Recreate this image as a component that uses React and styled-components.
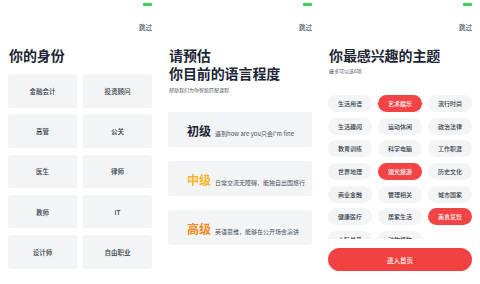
import React, { useState } from "react";
import styled, { createGlobalStyle } from "styled-components";

const GlobalStyle = createGlobalStyle`
  html, body {
    margin: 0;
    padding: 0;
    background: #ffffff;
  }
  body {
    font-family: "Noto Sans CJK SC", "Noto Sans", sans-serif;
    color: #1d2536;
  }
`;

const Screens = styled.div`
  display: grid;
  grid-template-columns: repeat(3, 160px);
  width: 480px;
  height: 284px;
  overflow: hidden;
`;

const Screen = styled.section`
  display: flex;
  flex-direction: column;
  padding: 0 8px;
  height: 284px;
  box-sizing: border-box;
  overflow: hidden;
`;

const StatusBar = styled.div`
  display: flex;
  justify-content: flex-end;
  padding: 3px 0 0;
  height: 3px;
`;

const Battery = styled.span`
  width: 9px;
  height: 3px;
  border-radius: 1px;
  background: #3ccf5e;
  margin-right: 0;
`;

const TopBar = styled.div`
  display: flex;
  justify-content: flex-end;
  margin-top: 17px;
`;

const Skip = styled.span`
  font-size: 6.5px;
  line-height: 8px;
  color: #2a2f3a;
`;

const Title = styled.h1`
  margin: 15px 0 0 1px;
  font-size: 14px;
  line-height: 18px;
  font-weight: 700;
  color: #1d2536;
  letter-spacing: -0.1px;
`;

const Hint = styled.p`
  margin: ${(p) => p.$top || 4}px 0 0 1px;
  font-size: 5px;
  line-height: 7px;
  color: #555b66;
`;

/* screen 1 */
const RoleGrid = styled.div`
  display: grid;
  grid-template-columns: 1fr 1fr;
  grid-auto-rows: 33.5px;
  column-gap: 6px;
  row-gap: 6.8px;
  margin-top: 10px;
`;

const RoleCard = styled.button`
  display: flex;
  align-items: center;
  justify-content: center;
  border: none;
  border-radius: 3px;
  background: #f3f4f6;
  font-family: inherit;
  font-size: 6.5px;
  font-weight: 500;
  color: #333a45;
  padding: 0;
  cursor: pointer;
`;

/* screen 2 */
const LevelList = styled.div`
  display: flex;
  flex-direction: column;
  gap: 14px;
  margin-top: 19px;
`;

const LevelCard = styled.div`
  display: flex;
  align-items: baseline;
  height: 35px;
  box-sizing: border-box;
  padding: 12px 0 0 19px;
  border-radius: 3px;
  background: #f3f4f6;
`;

const LevelName = styled.span`
  font-size: 12px;
  line-height: 14px;
  font-weight: 700;
  color: ${(p) => p.$color};
  margin-right: 4px;
`;

const LevelDesc = styled.span`
  font-size: 6px;
  color: #4a505b;
`;

/* screen 3 */
const TopicArea = styled.div`
  height: 144px;
  margin-top: 21px;
  overflow: hidden;
`;

const TopicGrid = styled.div`
  display: grid;
  grid-template-columns: repeat(3, 1fr);
  grid-auto-rows: 17px;
  column-gap: 6px;
  row-gap: 5.7px;
`;

const Chip = styled.button`
  display: flex;
  align-items: center;
  justify-content: center;
  border: none;
  border-radius: 9px;
  padding: 0;
  font-family: inherit;
  font-size: 6px;
  font-weight: 500;
  background: ${(p) => (p.$on ? "#f24444" : "#f3f4f6")};
  color: ${(p) => (p.$on ? "#ffffff" : "#333a45")};
  cursor: pointer;
`;

const EnterButton = styled.button`
  margin-top: 9px;
  height: 23px;
  border: none;
  border-radius: 12px;
  background: #f24141;
  color: #ffffff;
  font-family: inherit;
  font-size: 6.5px;
  font-weight: 500;
  cursor: pointer;
`;

const roles = ["金融会计", "投资顾问", "高管", "公关", "医生", "律师", "教师", "IT", "设计师", "自由职业"];

const levels = [
  { name: "初级", color: "#1d2536", desc: "遇到how are you只会I'm fine" },
  { name: "中级", color: "#f6b626", desc: "日常交流无障碍，能独自出国旅行" },
  { name: "高级", color: "#f08a24", desc: "英语思维，能够在公开场合演讲" },
];

const topics = [
  "生活用语", "艺术娱乐", "流行时尚",
  "生活趣闻", "运动休闲", "政治法律",
  "教育训练", "科学电脑", "工作职涯",
  "世界地理", "观光旅游", "历史文化",
  "商业金融", "管理相关", "城市国家",
  "健康医疗", "居家生活", "美食烹饪",
  "人际关系", "动物植物",
];

const Top = () => (
  <>
    <StatusBar><Battery /></StatusBar>
    <TopBar><Skip>跳过</Skip></TopBar>
  </>
);

export default function App() {
  const [picked, setPicked] = useState(["艺术娱乐", "观光旅游", "美食烹饪"]);

  const toggle = (t) => {
    setPicked((old) => old.includes(t) ? old.filter((x) => x !== t) : old.length < 6 ? [...old, t] : old);
  };

  return (
    <>
      <GlobalStyle />
      <Screens>
        <Screen>
          <Top />
          <Title>你的身份</Title>
          <RoleGrid>
            {roles.map((r) => <RoleCard key={r}>{r}</RoleCard>)}
          </RoleGrid>
        </Screen>

        <Screen>
          <Top />
          <Title>请预估<br />你目前的语言程度</Title>
          <Hint $top={4}>帮助我们为你智能匹配课程</Hint>
          <LevelList>
            {levels.map((l) => (
              <LevelCard key={l.name}>
                <LevelName $color={l.color}>{l.name}</LevelName>
                <LevelDesc>{l.desc}</LevelDesc>
              </LevelCard>
            ))}
          </LevelList>
        </Screen>

        <Screen>
          <Top />
          <Title>你最感兴趣的主题</Title>
          <Hint $top={3}>最多可以选6项</Hint>
          <TopicArea>
            <TopicGrid>
              {topics.map((t) => (
                <Chip key={t} $on={picked.includes(t)} onClick={() => toggle(t)}>{t}</Chip>
              ))}
            </TopicGrid>
          </TopicArea>
          <EnterButton>进入首页</EnterButton>
        </Screen>
      </Screens>
    </>
  );
}
